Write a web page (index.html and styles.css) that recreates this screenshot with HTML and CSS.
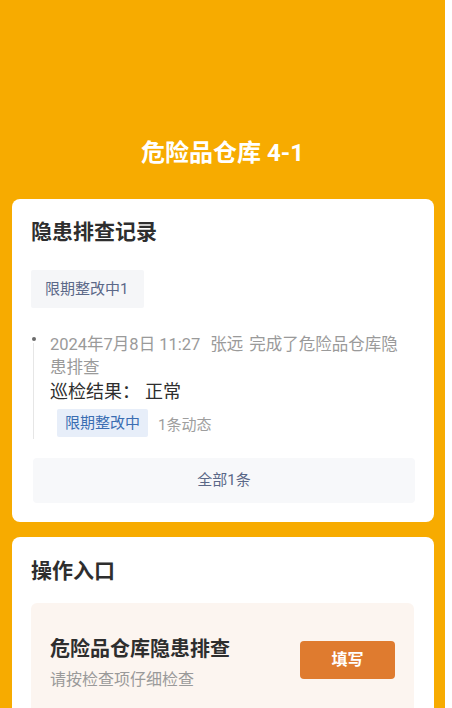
FILE: index.html
```html
<!DOCTYPE html>
<html lang="zh-CN">
<head>
<meta charset="utf-8">
<title>危险品仓库 4-1</title>
<link rel="stylesheet" href="styles.css">
</head>
<body>
<div class="page">
  <header class="header">
    <h1 class="page-title">危险品仓库 4-1</h1>
  </header>

  <section class="card">
    <h2 class="card-title">隐患排查记录</h2>
    <div class="filter-row">
      <span class="filter-tag">限期整改中1</span>
    </div>
    <div class="timeline">
      <div class="timeline-item">
        <span class="dot"></span>
        <p class="record-text"><span class="time">2024年7月8日 11:27</span><span class="who">张远</span><span class="action">完成了危险品仓库隐患排查</span></p>
        <p class="result"><span class="result-label">巡检结果：</span><span class="result-value">正常</span></p>
        <div class="status-row">
          <span class="status-tag">限期整改中</span>
          <span class="status-count">1条动态</span>
        </div>
      </div>
    </div>
    <div class="all-btn">全部1条</div>
  </section>

  <section class="card card-ops">
    <h2 class="card-title">操作入口</h2>
    <div class="op-box">
      <div class="op-text">
        <div class="op-title">危险品仓库隐患排查</div>
        <div class="op-sub">请按检查项仔细检查</div>
      </div>
      <div class="op-btn">填写</div>
    </div>
  </section>
</div>
</body>
</html>
```

FILE: styles.css
```css
* { box-sizing: border-box; }
html, body {
  margin: 0;
  padding: 0;
  background: #ffffff;
}
body {
  font-family: Roboto, "Noto Sans CJK SC", sans-serif;
  color: #333333;
  height: 708px;
  overflow: hidden;
}
.page {
  width: 445px;
  min-height: 708px;
  background: #f7ab00;
  padding-bottom: 20px;
}
.header {
  padding-top: 137px;
  height: 199px;
}
.page-title {
  margin: 0;
  text-align: center;
  color: #ffffff;
  font-size: 24px;
  line-height: 32px;
  font-weight: 700;
}
.card {
  margin: 0 11px 15px 12px;
  background: #ffffff;
  border-radius: 8px;
  padding: 19px 19px 19px 19px;
}
.card-title {
  margin: 0;
  font-size: 21px;
  line-height: 28px;
  font-weight: 700;
  color: #2e2e2e;
}
.filter-row {
  margin-top: 24px;
  display: flex;
}
.filter-tag {
  display: inline-block;
  height: 38px;
  line-height: 38px;
  padding: 0 16px 0 14px;
  background: #f5f6f8;
  color: #5b6888;
  font-size: 15px;
  border-radius: 2px;
}
.timeline {
  margin-top: 25px;
  margin-left: 2px;
  padding-right: 14px;
}
.timeline-item {
  position: relative;
  padding-left: 17px;
  padding-bottom: 2px;
}
.timeline-item::before {
  content: "";
  position: absolute;
  left: 0;
  top: 10px;
  bottom: 0;
  width: 1px;
  background: #e6e6e6;
}
.dot {
  position: absolute;
  left: -1.5px;
  top: 4px;
  width: 4px;
  height: 4px;
  border-radius: 50%;
  background: #6b6b6b;
}
.record-text {
  margin: 0;
  font-size: 16.5px;
  line-height: 23px;
  color: #9a9a9a;
}
.time { margin-right: 10px; }
.who { margin-right: 6px; }
.result {
  margin: 1px 0 0;
  font-size: 18px;
  line-height: 24px;
  color: #2e2e2e;
}
.result-label { margin-right: 5px; }
.status-row {
  margin-top: 5px;
  margin-left: 7px;
  display: flex;
  align-items: center;
  gap: 10px;
}
.status-tag {
  height: 28px;
  line-height: 28px;
  padding: 0 8px;
  background: #e7eef9;
  color: #3a6db2;
  font-size: 15px;
  border-radius: 2px;
}
.status-count {
  font-size: 15px;
  color: #9e9e9e;
}
.all-btn {
  margin: 19px 0 0 2px;
  height: 45px;
  line-height: 45px;
  background: #f7f8fa;
  border-radius: 4px;
  text-align: center;
  color: #5b6888;
  font-size: 15px;
}
.card-ops {
  padding-top: 20px;
  padding-bottom: 30px;
  padding-right: 20px;
}
.op-box {
  margin-top: 18px;
  background: #fcf5f0;
  border-radius: 6px;
  padding: 32px 19px 32px 19px;
  display: flex;
  justify-content: space-between;
  align-items: flex-start;
}
.op-title {
  font-size: 20px;
  line-height: 28px;
  font-weight: 700;
  color: #2e2e2e;
}
.op-sub {
  margin-top: 5px;
  font-size: 16px;
  line-height: 24px;
  color: #9a9a9a;
}
.op-btn {
  margin-top: 6px;
  width: 95px;
  height: 38px;
  line-height: 38px;
  text-align: center;
  background: #df7b2f;
  color: #ffffff;
  font-weight: 700;
  font-size: 16px;
  border-radius: 4px;
}
```
